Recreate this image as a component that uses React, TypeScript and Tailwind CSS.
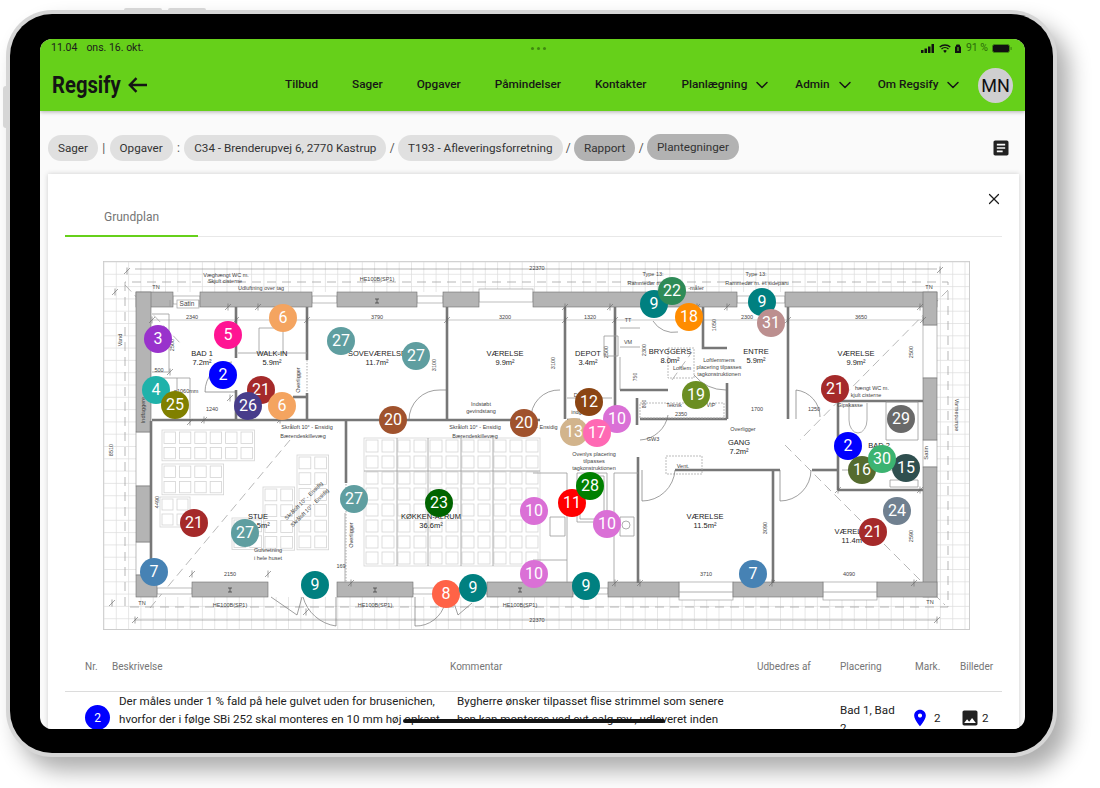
import { ChevronDown, X } from "lucide-react";

const navLinks = ["Tilbud", "Sager", "Opgaver", "Påmindelser", "Kontakter"];
const navMenus = ["Planlægning", "Admin", "Om Regsify"];

// page coordinates of the markers, stacking follows the array order
const pins: [number, number, number, string][] = [
  [3, 158, 339, "#9932cc"],
  [5, 228, 335, "#ff1493"],
  [6, 283, 318, "#f4a460"],
  [27, 341, 341, "#5f9ea0"],
  [27, 416, 356, "#5f9ea0"],
  [2, 223, 375, "#0000ff"],
  [21, 261, 390, "#a52a2a"],
  [4, 156, 390, "#20b2aa"],
  [25, 175, 405, "#808000"],
  [26, 248, 406, "#483d8b"],
  [6, 282, 406, "#f4a460"],
  [20, 393, 420, "#a0522d"],
  [20, 524, 423, "#a0522d"],
  [9, 654, 304, "#008080"],
  [22, 672, 291, "#2e8b57"],
  [18, 689, 317, "#ff8c00"],
  [9, 762, 302, "#008080"],
  [31, 771, 323, "#bc8f8f"],
  [19, 696, 395, "#6b8e23"],
  [21, 835, 389, "#a52a2a"],
  [12, 589, 402, "#8b4513"],
  [10, 617, 419, "#da70d6"],
  [13, 574, 432, "#d2b48c"],
  [17, 597, 433, "#ff69b4"],
  [29, 901, 419, "#696969"],
  [2, 848, 446, "#0000ff"],
  [21, 194, 523, "#a52a2a"],
  [27, 245, 533, "#5f9ea0"],
  [27, 354, 499, "#5f9ea0"],
  [23, 439, 503, "#006400"],
  [7, 154, 572, "#4682b4"],
  [9, 315, 585, "#008080"],
  [8, 446, 594, "#ff6347"],
  [9, 473, 588, "#008080"],
  [10, 534, 511, "#da70d6"],
  [10, 534, 574, "#da70d6"],
  [11, 572, 503, "#ff0000"],
  [28, 590, 486, "#008000"],
  [10, 607, 524, "#da70d6"],
  [9, 586, 586, "#008080"],
  [7, 753, 574, "#4682b4"],
  [16, 862, 470, "#556b2f"],
  [15, 906, 468, "#2f4f4f"],
  [30, 882, 459, "#3cb371"],
  [24, 897, 511, "#708090"],
  [21, 873, 532, "#a52a2a"],
];

const walls = [
  [136, 292, 37, 15], [200, 292, 112, 15], [337, 292, 80, 15], [443, 292, 36, 15],
  [533, 292, 204, 15], [785, 292, 152, 15],
  [136, 292, 15, 140], [136, 486, 15, 56], [136, 575, 21, 22],
  [923, 292, 14, 33], [923, 378, 14, 62], [923, 467, 14, 130],
  [192, 582, 76, 15], [337, 582, 76, 15], [487, 582, 86, 15], [608, 582, 71, 15],
  [733, 582, 90, 15], [877, 582, 60, 15],
];

const windows = [
  [173, 296, 27, 8], [177, 300, 22, 8], [312, 296, 25, 7], [417, 296, 26, 7], [479, 289, 54, 13], [737, 296, 48, 7],
  [923, 325, 14, 53], [923, 440, 14, 27], [136, 432, 15, 54], [136, 542, 15, 33],
  [157, 588, 35, 6], [413, 588, 74, 6], [573, 588, 35, 6], [679, 582, 54, 18], [823, 582, 54, 18],
];

const partitions = [
  "M152 420H540", "M567 420H580", "M640 419H727", "M727 383V419", "M236 307V358", "M236 390V419",
  "M307 307V360", "M307 393V419", "M447 307V419", "M565 307V419", "M615 307V419", "M788 307V419",
  "M703 307V348H727", "M620 390H668", "M838 401H923", "M838 401V490", "M838 490H923", "M812 470H838",
  "M638 457V583", "M773 470V583", "M675 470H780", "M346 421V483", "M151 582V421",
  "M293 397H307", "M637 398V425",
];

// thin inner lines: fixtures, kitchen units, built-in boxes
const fixtures = [
  "M238 353H307", "M259 353V328H283V353", "M152 314H169V372H152", "M150 378H190V418", "M177 378V418",
  "M567 398H612", "M533 473H567M614 473H638M567 473V583M614 473V583M533 560H567", "M577 473H607V522H577Z",
  "M580 476H604V519H580Z", "M550 517H565V536H550Z", "M620 517H634V536H620Z", "M622 525A4 4 0 1 0 630 525A4 4 0 1 0 622 525",
  "M604 336H618V356H604Z", "M620 357V390", "M620 328H640", "M620 347H640", "M849 403V420A9 13 0 0 0 867 420V403",
  "M886 402H918V440H886Z", "M890 480H918V487H890Z", "M170 300V307M199 300V307", "M842 470H918", "M345 513V582",
  "M679 592H733", "M823 592H877", "M397 438V566M428 438V566M461 438V566M493 438V566M364 471H540",
];

const beams = [[377, 301], [230, 590], [375, 590], [520, 590]];

const ticks = [
  [152, 320], [236, 320], [307, 320], [447, 320], [565, 320], [615, 320], [788, 320], [923, 320], [127, 271],
  [115, 292], [192, 574], [268, 574], [351, 583], [230, 398], [280, 420], [190, 422], [306, 612], [575, 583],
  [615, 583], [640, 583], [772, 583], [914, 583], [920, 490], [838, 490], [112, 603], [135, 620], [937, 620], [940, 270],
  [228, 307], [258, 307], [565, 307], [610, 307], [697, 307], [727, 307], [920, 307], [170, 372], [204, 420],
];

// x, y, columns, rows, cell size of the tile blocks
const tiles = [
  [364, 438, 11, 8, 16], [297, 455, 2, 6, 15.8], [263, 487, 2, 4, 15.8], [162, 464, 4, 2, 15.4],
  [160, 497, 2, 2, 15], [162, 430, 6, 2, 15.4], [232, 518, 2, 2, 15.8],
];

const labels: [number, number, string, number?, number?][] = [
  [226, 277, "Væghængt WC m."], [225, 283, "Skjult cisterne"], [261, 290, "Udluftning over tag"],
  [377, 281, "HE100B(SP1)"], [537, 270, "22370"], [653, 276, "Type 13:"], [645, 285, "Rammedør m."],
  [756, 276, "Type 13:"], [757, 285, "Rammedør m. et sideparti"], [696, 290, "-måler"],
  [156, 289, "TN"], [929, 289, "TN"], [192, 319, "2340"], [377, 319, "3790"], [505, 319, "3200"],
  [590, 319, "1320"], [747, 319, "2300"], [861, 319, "3650"], [159, 372, "500"], [212, 411, "1240"],
  [186, 393, "ø1060mm"], [481, 406, "Indstøbt"], [481, 413, "gevindstang"],
  [307, 429, "Skråloft 10° - Ensidig"], [303, 438, "Bærendeskillevæg"], [475, 429, "Skråloft 10° - Ensidig"],
  [475, 438, "Bærendeskillevæg"], [542, 429, "10° - Ensidig"], [850, 407, "Gipskasse"], [872, 390, "hængt WC m."],
  [866, 397, "kjult cisterne"], [628, 322, "TT"], [628, 344, "VM"], [682, 370, "Loftlem"], [674, 407, "Teknik"],
  [711, 407, "VIP"], [681, 416, "2350"], [757, 411, "1700"], [814, 411, "1250"], [743, 431, "Overligger"],
  [653, 441, "GW3"], [719, 362, "Loftlemmens"], [719, 369, "placering tilpasses"], [719, 376, "tagkonstruktionen"],
  [594, 456, "Ovenlys placering"], [594, 463, "tilpasses"], [594, 470, "tagkonstruktionen"], [683, 468, "Vent."],
  [706, 576, "3710"], [849, 576, "4090"], [230, 576, "2150"], [268, 552, "Gulvretning"], [268, 560, "i hele huset"],
  [230, 607, "HE100B(SP1)"], [375, 607, "HE100B(SP1)"], [520, 607, "HE100B(SP1)"], [537, 622, "22370"],
  [142, 605, "TN"], [930, 604, "TN"], [341, 568, "169"], [581, 397, "Depot"], [581, 414, "indgang"],
  [187, 306, "Satin", 6.5],
  [122, 340, "Vand", 5.5, -90], [436, 365, "3100", 5.5, -90], [174, 345, "2500", 5.5, -90], [608, 352, "2500", 5.5, -90],
  [913, 352, "2500", 5.5, -90], [555, 363, "3100", 5.5, -90], [646, 350, "2300", 5.5, -90], [716, 325, "1050", 5.5, -90],
  [113, 450, "8510", 5.5, -90], [159, 502, "4490", 5.5, -90], [767, 528, "3090", 5.5, -90], [913, 536, "2590", 5.5, -90],
  [300, 380, "Overligger", 5.5, -90], [353, 535, "Overligger", 5.5, -90], [145, 410, "Indfaggere", 5.5, -90],
  [955, 415, "Varmepumpe", 5.5, 90], [928, 453, "Satin", 6, -90], [305, 502, "Skråloft 10° - Ensidig", 5.5, -45],
  [311, 509, "Skråloft 10° - Ensidig", 5.5, -45], [637, 377, "750", 5, -90], [646, 404, "800", 5, -90],
];

const rooms: [number, number, string, string][] = [
  [202, 356, "BAD 1", "7.2m²"], [272, 356, "WALK-IN", "5.9m²"], [377, 356, "SOVEVÆRELSE", "11.7m²"],
  [505, 356, "VÆRELSE", "9.9m²"], [588, 356, "DEPOT", "3.4m²"], [670, 354, "BRYGGERS", "8.0m²"],
  [756, 354, "ENTRE", "5.9m²"], [856, 356, "VÆRELSE", "9.9m²"], [739, 445, "GANG", "7.2m²"],
  [879, 448, "BAD 2", ""], [705, 519, "VÆRELSE", "11.5m²"], [853, 534, "VÆRELSE", "11.4m²"],
  [258, 519, "STUE", "27.5m²"], [431, 519, "KØKKEN-ALRUM", "36.6m²"],
];

function FloorPlan() {
  const verticals = Array.from({ length: 71 }, (_, i) => 104 + i * 12.3);
  const horizontals = Array.from({ length: 30 }, (_, i) => 262 + i * 12.3);

  return (
    <svg viewBox="103 261 867 369" className="h-[369px] w-[867px]" fontFamily="Liberation Sans, sans-serif">
      <rect x="103.5" y="261.5" width="866" height="368" fill="#fff" stroke="#ccc" />
      {verticals.map((x) => (
        <path key={x} d={`M${x} 262V629`} stroke="#dcdcdc" strokeWidth="0.7" />
      ))}
      {horizontals.map((y) => (
        <path key={y} d={`M104 ${y}H969`} stroke="#dcdcdc" strokeWidth="0.7" />
      ))}
      <path d="M125 282V607H948V282H125" fill="none" stroke="#999" strokeWidth="0.7" strokeDasharray="9 6" />
      <path d="M135 269H937M135 620H937" fill="none" stroke="#888" strokeWidth="0.6" />
      <rect x="136" y="292" width="801" height="305" fill="#fff" />

      {tiles.map(([x, y, cols, rows, size], t) => (
        <g key={t} fill="#fff" stroke="#d4d4d4" strokeWidth="0.8">
          <rect x={x} y={y} width={cols * size} height={rows * size} />
          {Array.from({ length: cols * rows }, (_, i) => (
            <rect
              key={i}
              x={x + (i % cols) * size + 2}
              y={y + Math.floor(i / cols) * size + 2}
              width={size - 4}
              height={size - 4}
            />
          ))}
        </g>
      ))}

      <path d="M152 320H922" stroke="#c8c8c8" strokeWidth="1.2" />
      <path
        d="M125 285L182 345M150 608L290 440M948 290L800 440M785 445L945 605M672 380L692 352"
        stroke="#999"
        strokeWidth="0.7"
        strokeDasharray="9 5"
        fill="none"
      />

      {windows.map(([x, y, w, h], i) => (
        <rect key={i} x={x} y={y} width={w} height={h} fill="#fff" stroke="#a0a0a0" strokeWidth="0.7" />
      ))}
      {walls.map(([x, y, w, h], i) => (
        <rect key={i} x={x} y={y} width={w} height={h} fill="#b4b4b4" stroke="#707070" strokeWidth="0.6" />
      ))}
      {partitions.map((d) => (
        <path key={d} d={d} stroke="#777" strokeWidth="2.6" fill="none" />
      ))}
      {fixtures.map((d) => (
        <path key={d} d={d} stroke="#9a9a9a" strokeWidth="0.8" fill="none" />
      ))}
      {beams.map(([x, y]) => (
        <path key={x} d={`M${x - 2} ${y - 2}h4M${x} ${y - 2}v4M${x - 2} ${y + 2}h4`} stroke="#333" strokeWidth="0.7" />
      ))}
      {ticks.map(([x, y]) => (
        <path key={`${x}-${y}`} d={`M${x - 3} ${y + 3}L${x + 3} ${y - 3}M${x} ${y - 3.5}V${y + 3.5}`} stroke="#666" strokeWidth="0.6" />
      ))}
      <path d="M346 484V582M307 360V393" stroke="#aaa" strokeWidth="1" strokeDasharray="1.5 1.5" />
      <path d="M640 403h84v15h-84z M668 348h26v30h-26z M666 456h36v18h-36z" fill="none" stroke="#aaa" strokeWidth="0.8" strokeDasharray="2 1" />

      {/* door swings */}
      <g fill="none" stroke="#777" strokeWidth="0.7">
        <path d="M205 392A30 30 0 0 1 232 362M205 392H236" />
        <path d="M409 420A30 30 0 0 1 440 390M440 390H446" />
        <path d="M531 420A28 28 0 0 1 560 390" />
        <path d="M642 501A33 33 0 0 0 675 470M642 470V501" />
        <path d="M780 501A31 31 0 0 0 811 470M780 470V501" />
        <path d="M640 440A30 30 0 0 0 668 415" />
        <path d="M694 375A42 42 0 0 0 726 390" />
        <path d="M796 390A27 27 0 0 1 820 417M796 390V419" />
        <path d="M271 597L297 615L302 597M303 597A40 40 0 0 0 336 626V597" />
        <path d="M415 597V626A30 30 0 0 0 445 603M452 597L458 615L472 603" />
        <path d="M653 321A24 24 0 0 0 678 332" />
      </g>

      <g fill="#444" fontSize="5.5" textAnchor="middle">
        {labels.map(([x, y, text, size, rotate], i) => (
          <text
            key={i}
            x={x}
            y={y}
            fontSize={size}
            transform={rotate ? `rotate(${rotate} ${x} ${y})` : undefined}
          >
            {text}
          </text>
        ))}
      </g>
      <g fill="#222" fontSize="7.5" textAnchor="middle">
        {rooms.map(([x, y, name, area]) => (
          <text key={`${x}${name}`} x={x}>
            <tspan x={x} y={y}>{name}</tspan>
            <tspan x={x} y={y + 8.5}>{area}</tspan>
          </text>
        ))}
      </g>
    </svg>
  );
}

function Pill({ label, tone = "bg-[#e0e0e0]", className = "" }: { label: string; tone?: string; className?: string }) {
  return <span className={`rounded-full px-[10px] py-[5px] text-[11.7px] leading-[16px] text-[#333] ${tone} ${className}`}>{label}</span>;
}

function Sep({ char }: { char: string }) {
  return <span className="w-[11.5px] text-center text-[12px] text-[#555]">{char}</span>;
}

export default function App() {
  return (
    <div className="h-[788px] w-[1100px] bg-white pt-[10px] pl-[6px] font-['Roboto',sans-serif]">
      <div className="relative h-[747px] w-[1051px] rounded-[46px] bg-[#d6d6d6] p-[4px] shadow-[12px_14px_22px_rgba(0,0,0,0.32)]">
        {/* hardware buttons */}
        <div className="absolute top-[76px] left-[-3px] h-[42px] w-[3px] rounded-l bg-[#d6d6d6]" />
        <div className="absolute top-[-2px] left-[118px] h-[2px] w-[38px] rounded-t bg-[#d6d6d6]" />
        <div className="absolute top-[-2px] left-[162px] h-[2px] w-[38px] rounded-t bg-[#d6d6d6]" />

        <div className="h-full w-full rounded-[42px] bg-black pt-[25px] pr-[27px] pb-[23px] pl-[30px]">
          <div className="relative h-[690px] w-[985px] overflow-hidden rounded-[12px] bg-[#fafafa]">
            <header className="h-[72px] bg-[#66d01a] shadow-[0_1px_4px_rgba(0,0,0,0.3)]">
              <div className="flex h-[18px] items-center justify-between pr-[13px] pl-[11px] text-[10.5px] text-[#1c1c1c]">
                <span>
                  11.04<span className="ml-[9px]">ons. 16. okt.</span>
                </span>
                <div className="ml-[12px] flex gap-[3px]">
                  <span className="h-[3px] w-[3px] rounded-full bg-[#3f8a10]" />
                  <span className="h-[3px] w-[3px] rounded-full bg-[#3f8a10]" />
                  <span className="h-[3px] w-[3px] rounded-full bg-[#3f8a10]" />
                </div>
                <div className="flex items-center gap-[4px]">
                  <svg width="14" height="9" viewBox="0 0 14 9" fill="#111">
                    <rect x="0" y="6" width="2.5" height="3" />
                    <rect x="3.5" y="4.5" width="2.5" height="4.5" />
                    <rect x="7" y="2.5" width="2.5" height="6.5" />
                    <rect x="10.5" y="0" width="2.5" height="9" />
                  </svg>
                  <svg width="12" height="9" viewBox="0 0 12 9" fill="none" stroke="#111" strokeWidth="1.3">
                    <path d="M0.7 3A8 8 0 0 1 11.3 3M2.5 5A5 5 0 0 1 9.5 5" />
                    <path d="M6 9L4.2 6.8A2.6 2.6 0 0 1 7.8 6.8Z" fill="#111" stroke="none" />
                  </svg>
                  <svg width="6" height="9" viewBox="0 0 6 9" fill="#111">
                    <path d="M1 2.5V1.5A1 1 0 0 1 2 .5H4A1 1 0 0 1 5 1.5V2.5H6V9H0V2.5ZM2 3.5V4.5H4V3.5ZM2 5.5V6.5H4V5.5Z" fillRule="evenodd" />
                  </svg>
                  <span className="ml-[1px] text-[#2a6a08]">91 %</span>
                  <svg width="20" height="9" viewBox="0 0 20 9">
                    <rect x="0.5" y="0.5" width="17" height="8" rx="2" fill="#111" stroke="#3f8a10" />
                    <rect x="18.5" y="3" width="1.2" height="3" rx="0.5" fill="#3f8a10" />
                  </svg>
                </div>
              </div>
              <nav className="flex h-[54px] items-center pt-[2px] pr-[12px] pl-[12px] text-[11.8px] font-medium text-[#161616]">
                <span className="w-[68px] origin-left scale-x-[0.88] text-[23px] leading-none font-bold whitespace-nowrap text-[#141414]">
                  Regsify
                </span>
                <svg className="ml-[8px]" width="19" height="16" viewBox="0 0 19 16" fill="none" stroke="#141414" strokeWidth="2.4">
                  <path d="M19 8H2M8.5 1.2L1.8 8L8.5 14.8" />
                </svg>
                <div className="ml-[138px] flex gap-[34px]">
                  {navLinks.map((link) => (
                    <span key={link}>{link}</span>
                  ))}
                </div>
                <div className="ml-[35px] flex gap-[23px]">
                  {navMenus.map((menu) => (
                    <span key={menu} className="flex items-center gap-[5px] whitespace-nowrap">
                      {menu}
                      <ChevronDown size={20} strokeWidth={1.8} />
                    </span>
                  ))}
                </div>
                <span className="ml-auto flex h-[35px] w-[35px] items-center justify-center rounded-full bg-[#cfcfcf] text-[18px] font-normal text-[#111]">
                  MN
                </span>
              </nav>
            </header>

            <div className="flex h-[63px] items-center pt-[11px] pr-[14px] pl-[8px]">
              <Pill label="Sager" />
              <Sep char="|" />
              <Pill label="Opgaver" />
              <Sep char=":" />
              <Pill label="C34 - Brenderupvej 6, 2770 Kastrup" />
              <Sep char="/" />
              <Pill label="T193 - Afleveringsforretning" />
              <Sep char="/" />
              <Pill label="Rapport" tone="bg-[#b2b2b2]" />
              <Sep char="/" />
              <Pill label="Plantegninger" tone="bg-[#b2b2b2]" className="-mt-[2px]" />
              <svg className="ml-auto" width="20" height="20" viewBox="0 0 24 24" fill="#212121">
                <path d="M19 3H5c-1.1 0-2 .9-2 2v14c0 1.1.9 2 2 2h14c1.1 0 2-.9 2-2V5c0-1.1-.9-2-2-2zm-5 14H7v-2h7v2zm3-4H7v-2h10v2zm0-4H7V7h10v2z" />
              </svg>
            </div>

            <section className="relative mr-[6px] ml-[8px] bg-white px-[17px] shadow-[0_0_5px_rgba(0,0,0,0.18)]">
              <X size={18} strokeWidth={1.6} className="absolute top-[16px] right-[16px] text-[#1c1c1c]" />
              <div className="flex h-[63px] items-end border-b border-[#e8e8e8]">
                <div className="-mb-px flex h-[40px] w-[133px] justify-center border-b-2 border-[#66d01a] pt-[11px] text-[12px] leading-[18px] text-[#757575]">
                  Grundplan
                </div>
              </div>

              <div className="relative mt-[24px] ml-[38px] h-[369px] w-[867px]">
                <FloorPlan />
                {pins.map(([nr, x, y, color], i) => (
                  <span
                    key={i}
                    className="absolute flex h-[28px] w-[28px] items-center justify-center rounded-full text-[16px] text-white"
                    style={{ left: x - 117, top: y - 275, backgroundColor: color }}
                  >
                    {nr}
                  </span>
                ))}
              </div>

              <div className="mt-[31px] grid grid-cols-[47px_338px_307px_83px_75px_45px_42px] border-b border-[#dcdcdc] pb-[18px] text-[10px] leading-[12px] text-[#757575]">
                <span className="pl-[20px]">Nr.</span>
                <span>Beskrivelse</span>
                <span>Kommentar</span>
                <span>Udbedres af</span>
                <span>Placering</span>
                <span>Mark.</span>
                <span>Billeder</span>
              </div>
              <div className="grid grid-cols-[47px_338px_307px_83px_75px_45px_42px] text-[11.6px] leading-[18px] text-[#212121]">
                <div className="pt-[13px] pl-[20px]">
                  <span className="flex h-[25px] w-[25px] items-center justify-center rounded-full bg-[#0000ff] text-[12px] text-white">2</span>
                </div>
                <p className="w-[325px] pl-[7px] whitespace-nowrap">
                  Der måles under 1 % fald på hele gulvet uden for brusenichen,
                  <br />
                  hvorfor der i følge SBi 252 skal monteres en 10 mm høj opkant
                </p>
                <p className="pl-[7px] whitespace-nowrap">
                  Bygherre ønsker tilpasset flise strimmel som senere
                  <br />
                  hen kan monteres ved evt salg mv., udleveret inden
                </p>
                <span />
                <p className="w-[64px] pt-[9px]">Bad 1, Bad 2</p>
                <div className="flex items-center gap-[4px] self-start pt-[16px]">
                  <svg className="-ml-[5px]" width="20" height="20" viewBox="0 0 24 24" fill="#0000ff">
                    <path d="M12 2C8.13 2 5 5.13 5 9c0 5.25 7 13 7 13s7-7.75 7-13c0-3.87-3.13-7-7-7zm0 9.5c-1.38 0-2.5-1.12-2.5-2.5s1.12-2.5 2.5-2.5 2.5 1.12 2.5 2.5-1.12 2.5-2.5 2.5z" />
                  </svg>
                  2
                </div>
                <div className="flex items-center gap-[2px] self-start pt-[16px]">
                  <svg width="20" height="20" viewBox="0 0 24 24" fill="#212121">
                    <path d="M21 19V5c0-1.1-.9-2-2-2H5c-1.1 0-2 .9-2 2v14c0 1.1.9 2 2 2h14c1.1 0 2-.9 2-2zM8.5 13.5l2.5 3.01L14.5 12l4.5 6H5l3.5-4.5z" />
                  </svg>
                  2
                </div>
              </div>
            </section>

            {/* home indicator */}
            <div className="absolute bottom-[6px] left-[363px] h-[4px] w-[262px] rounded-full bg-[#141414]" />
          </div>
        </div>
      </div>
    </div>
  );
}
